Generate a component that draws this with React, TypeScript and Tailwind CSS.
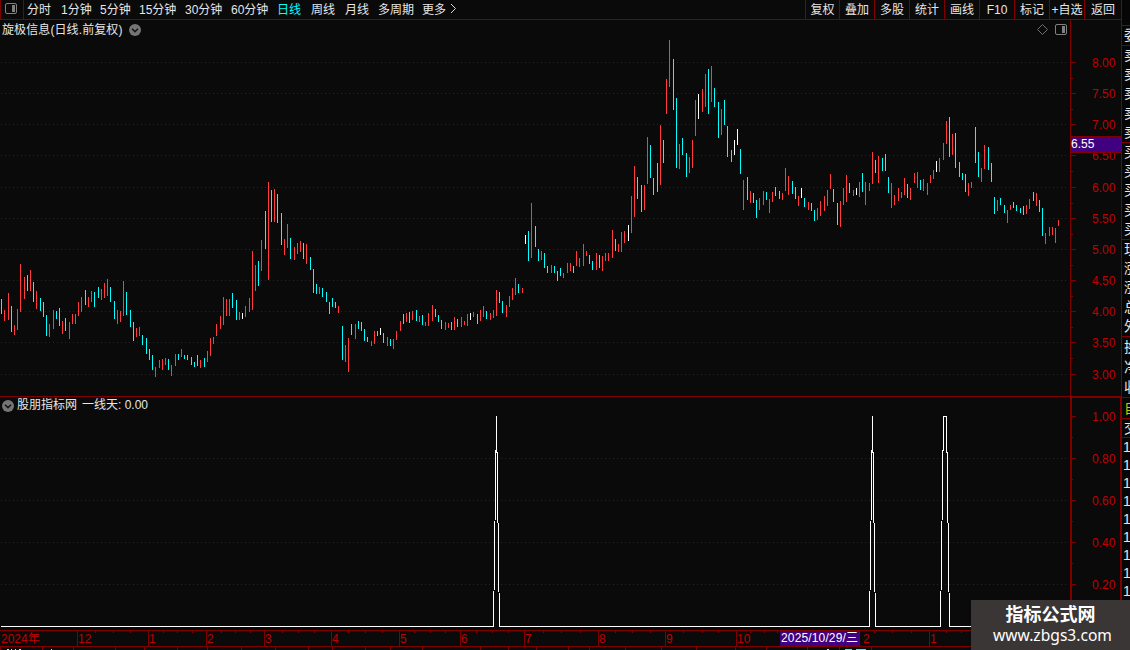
import React from "react";
import clsx from "clsx";

type Bar = [number, number, number];

// [x, high, low] in pixels
const upBars: Bar[] = [
  [4, 310, 321], [8, 293, 320], [14, 325, 335], [17, 309, 330], [20, 264, 312], [24, 277, 299],
  [30, 270, 291], [36, 291, 309], [49, 324, 337], [53, 310, 329], [62, 321, 334], [69, 322, 339],
  [72, 314, 324], [75, 314, 324], [78, 302, 316], [81, 297, 312], [88, 297, 307], [91, 291, 302],
  [101, 289, 300], [104, 283, 298], [107, 279, 296], [117, 310, 324], [120, 311, 322], [123, 281, 316],
  [136, 328, 337], [139, 327, 336], [155, 367, 377], [159, 360, 368], [162, 359, 370], [165, 358, 365],
  [171, 365, 376], [175, 354, 366], [181, 349, 357], [200, 360, 368], [207, 351, 362], [210, 338, 356],
  [213, 337, 344], [216, 324, 336], [220, 316, 329], [223, 297, 325], [226, 299, 316], [229, 299, 316],
  [239, 312, 320], [245, 306, 317], [249, 298, 312], [252, 251, 310], [255, 265, 291], [261, 240, 271],
  [268, 182, 280], [274, 189, 222], [284, 239, 255], [287, 224, 248], [294, 247, 260], [297, 243, 254],
  [300, 241, 252], [306, 244, 264], [319, 287, 294], [338, 306, 313], [345, 345, 362], [348, 338, 372],
  [355, 324, 339], [371, 341, 346], [374, 331, 344], [387, 337, 346], [393, 339, 349], [396, 331, 340],
  [400, 321, 331], [406, 313, 322], [412, 311, 320], [419, 316, 322], [425, 322, 326], [428, 313, 326],
  [432, 305, 321], [445, 322, 330], [448, 323, 328], [454, 317, 330], [461, 317, 327], [464, 321, 325],
  [467, 314, 326], [473, 312, 317], [480, 310, 321], [483, 306, 317], [490, 313, 320], [493, 310, 318],
  [496, 290, 316], [506, 305, 317], [509, 296, 307], [512, 288, 300], [515, 278, 295], [522, 288, 293],
  [531, 203, 258], [541, 251, 260], [551, 265, 273], [563, 273, 278], [567, 263, 273], [570, 263, 271],
  [576, 251, 266], [579, 258, 267], [583, 244, 266], [586, 251, 256], [596, 253, 270], [602, 256, 271],
  [605, 253, 261], [608, 253, 261], [612, 230, 258], [618, 244, 252], [621, 232, 252], [624, 231, 243],
  [631, 196, 233], [634, 166, 217], [644, 185, 210], [647, 137, 184], [660, 125, 185], [666, 79, 114],
  [669, 40, 87], [679, 144, 169], [689, 157, 173], [692, 140, 168], [695, 100, 136], [702, 89, 112],
  [705, 74, 107], [711, 66, 102], [721, 109, 135], [743, 180, 210], [750, 191, 203], [759, 198, 210],
  [763, 191, 205], [769, 199, 213], [772, 192, 202], [782, 193, 200], [785, 168, 191], [788, 176, 195],
  [798, 196, 206], [808, 202, 210], [817, 208, 220], [820, 201, 216], [824, 196, 211], [827, 190, 206],
  [830, 174, 189], [840, 201, 227], [843, 188, 205], [846, 175, 202], [853, 190, 196], [859, 182, 197],
  [865, 182, 205], [869, 183, 191], [872, 152, 184], [878, 156, 183], [891, 183, 208], [894, 195, 205],
  [898, 188, 201], [901, 192, 198], [904, 178, 195], [910, 188, 200], [914, 173, 183], [917, 172, 188],
  [923, 179, 191], [927, 183, 195], [930, 175, 183], [933, 170, 179], [939, 158, 172], [943, 143, 160],
  [946, 121, 144], [952, 134, 155], [968, 183, 196], [971, 182, 188], [981, 168, 182], [984, 145, 169],
  [997, 200, 211], [1007, 210, 223], [1010, 205, 210], [1026, 205, 214], [1029, 199, 209], [1036, 193, 206],
  [1045, 233, 244], [1049, 227, 236], [1052, 227, 235], [1055, 228, 243], [1058, 220, 226],
];

const downBars: Bar[] = [
  [1, 299, 314], [11, 306, 332], [27, 275, 291], [33, 282, 302], [40, 298, 311], [43, 302, 317],
  [46, 315, 336], [56, 311, 319], [59, 308, 326], [65, 318, 331], [85, 290, 305], [94, 292, 307],
  [98, 287, 298], [110, 287, 302], [114, 301, 319], [126, 292, 315], [130, 310, 327], [133, 322, 341],
  [142, 335, 345], [146, 338, 354], [149, 349, 360], [152, 355, 370], [168, 359, 370], [178, 354, 360],
  [184, 355, 359], [187, 355, 360], [191, 357, 365], [194, 362, 367], [197, 355, 366], [204, 358, 367],
  [232, 293, 308], [236, 300, 320], [258, 261, 286], [265, 211, 249], [271, 190, 222], [277, 194, 223],
  [281, 213, 245], [290, 238, 259], [303, 243, 259], [310, 257, 270], [313, 269, 293], [316, 284, 294],
  [322, 288, 297], [326, 292, 302], [329, 302, 314], [332, 298, 307], [335, 302, 308], [342, 326, 360],
  [351, 324, 335], [358, 321, 329], [361, 322, 331], [364, 329, 341], [367, 337, 342], [377, 331, 336],
  [383, 333, 343], [390, 339, 346], [403, 314, 324], [409, 312, 323], [416, 310, 321], [422, 315, 325],
  [435, 309, 317], [438, 315, 322], [441, 320, 329], [451, 322, 330], [457, 319, 327], [477, 314, 324],
  [486, 311, 319], [499, 292, 303], [502, 301, 313], [518, 284, 293], [528, 231, 261], [535, 226, 247],
  [538, 249, 261], [544, 253, 268], [547, 266, 273], [554, 266, 273], [557, 271, 281], [560, 268, 276],
  [573, 266, 273], [589, 255, 264], [592, 261, 270], [599, 255, 268], [615, 239, 251], [637, 177, 199],
  [641, 185, 212], [650, 145, 178], [653, 178, 195], [657, 163, 192], [663, 140, 163], [673, 59, 110],
  [676, 98, 168], [682, 138, 155], [686, 153, 177], [708, 69, 114], [714, 88, 107], [718, 102, 138],
  [724, 100, 125], [727, 126, 157], [731, 150, 162], [740, 149, 174], [747, 177, 200], [753, 193, 203],
  [756, 200, 218], [766, 192, 200], [775, 187, 196], [779, 191, 199], [792, 181, 194], [795, 187, 199],
  [804, 198, 207], [811, 203, 211], [814, 210, 221], [833, 189, 202], [837, 203, 225], [849, 183, 193],
  [862, 173, 192], [875, 160, 173], [882, 158, 171], [885, 154, 171], [888, 177, 193], [907, 184, 198],
  [920, 180, 190], [949, 117, 157], [955, 133, 168], [959, 162, 177], [962, 173, 180], [965, 174, 192],
  [975, 127, 163], [978, 152, 177], [988, 147, 170], [991, 163, 182], [994, 197, 214], [1000, 198, 205],
  [1004, 205, 213], [1013, 202, 208], [1016, 205, 211], [1020, 208, 213], [1023, 206, 215],
  [1033, 192, 201], [1039, 200, 212], [1042, 208, 236],
];

const flatBars: Bar[] = [
  [242, 313, 319], [380, 328, 335], [470, 313, 320], [525, 235, 244], [628, 225, 241], [698, 94, 119],
  [734, 140, 155], [737, 129, 145], [801, 188, 198], [856, 188, 195], [936, 161, 172],
];

const periods = [
  { label: "分时", width: "w-[34px]" },
  { label: "1分钟", width: "w-[39px]" },
  { label: "5分钟", width: "w-[39px]" },
  { label: "15分钟", width: "w-[46px]" },
  { label: "30分钟", width: "w-[46px]" },
  { label: "60分钟", width: "w-[46px]" },
  { label: "日线", width: "w-[34px]", active: true },
  { label: "周线", width: "w-[34px]" },
  { label: "月线", width: "w-[33px]" },
  { label: "多周期", width: "w-[44px]" },
  { label: "更多", width: "w-[28px]" },
];

const tools = [
  { label: "复权", width: "w-[34px]" },
  { label: "叠加", width: "w-[35px]" },
  { label: "多股", width: "w-[35px]" },
  { label: "统计", width: "w-[35px]" },
  { label: "画线", width: "w-[35px]" },
  { label: "F10", width: "w-[35px]" },
  { label: "标记", width: "w-[35px]" },
  { label: "+自选", width: "w-[35px]" },
  { label: "返回", width: "w-[37px]" },
];

const priceTicks = [
  { y: 62, label: "8.00" },
  { y: 93, label: "7.50" },
  { y: 124, label: "7.00" },
  { y: 155, label: "6.50" },
  { y: 187, label: "6.00" },
  { y: 218, label: "5.50" },
  { y: 249, label: "5.00" },
  { y: 280, label: "4.50" },
  { y: 311, label: "4.00" },
  { y: 342, label: "3.50" },
  { y: 374, label: "3.00" },
];
const priceMinor = [78, 109, 171, 203, 234, 265, 296, 327, 358];

const signalTicks = [
  { y: 416, label: "1.00" },
  { y: 458, label: "0.80" },
  { y: 500, label: "0.60" },
  { y: 542, label: "0.40" },
  { y: 584, label: "0.20" },
];
const signalMinor = [437, 479, 521, 563, 605];

const months = [
  { x: 77, label: "12" },
  { x: 148, label: "1" },
  { x: 206, label: "2" },
  { x: 264, label: "3" },
  { x: 331, label: "4" },
  { x: 399, label: "5" },
  { x: 460, label: "6" },
  { x: 524, label: "7" },
  { x: 598, label: "8" },
  { x: 665, label: "9" },
  { x: 736, label: "10" },
  { x: 859, label: "2" },
  { x: 929, label: "1" },
];
const dayTicks = [
  95, 113, 130, 163, 177, 192, 221, 235, 250, 282, 298, 314, 348, 365, 382, 414, 430, 445, 476, 492,
  508, 543, 561, 580, 615, 632, 650, 683, 702, 718, 750, 764, 777, 874, 892, 911, 946, 961,
];
const footTicks = [
  0, 42, 73, 115, 144, 177, 207, 241, 275, 308, 332, 365, 390, 422, 480, 508, 536, 568, 589, 625,
  661, 696, 735, 766, 807, 839, 871,
];

const quoteGroups = [
  { rows: ["委"], height: "h-5" },
  { rows: ["卖", "卖", "卖", "卖", "卖"], height: "h-[97px]" },
  { rows: ["买", "买", "买", "买", "买"], height: "h-[97px]" },
  { rows: ["现", "涨", "涨", "总", "外"], height: "h-[97px]" },
  { rows: ["换", "净", "收"], height: "h-[61px]" },
  { rows: ["自"], height: "h-[21px]", highlight: true },
  { rows: ["交"], height: "h-[19px]" },
];

const barsPath = (bars: Bar[]) =>
  bars.map(([x, top, bottom]) => `M${x} ${top}h1V${bottom}h-1z`).join("");

const PanelIcon = ({ className }: { className?: string }) => (
  <svg width="12" height="12" viewBox="0 0 12 12" className={className}>
    <rect x="0.5" y="0.5" width="11" height="10" rx="1.5" fill="none" stroke="#808080" />
    <rect x="7" y="2" width="3" height="7" fill="#808080" />
  </svg>
);

const ToggleIcon = () => (
  <svg width="12" height="12" viewBox="0 0 12 12" className="shrink-0">
    <circle cx="6" cy="6" r="6" fill="#757575" />
    <path d="M3 4.8 6 7.6 9 4.8" fill="none" stroke="#151515" strokeWidth="1.5" />
  </svg>
);

const Toolbar = () => (
  <header className="flex h-5 shrink-0 items-stretch border-b border-[#800000] leading-[20px]">
    <div className="flex w-6 items-start border-x border-[#800000] pt-[3px] pl-1">
      <PanelIcon />
    </div>
    <nav className="flex pl-[3px]">
      {periods.map((item) => (
        <span
          key={item.label}
          className={clsx("shrink-0 whitespace-nowrap", item.width, item.active && "text-[#00ffff]")}
        >
          {item.label}
        </span>
      ))}
      <svg width="8" height="19" viewBox="0 0 8 19">
        <path d="M1 4 5.5 8.5 1 13" fill="none" stroke="#d8d8d8" />
      </svg>
    </nav>
    <div className="ml-auto flex">
      {tools.map((item) => (
        <span
          key={item.label}
          className={clsx(
            "flex shrink-0 justify-center border-l border-[#800000] whitespace-nowrap",
            item.width
          )}
        >
          {item.label}
        </span>
      ))}
    </div>
  </header>
);

const PriceChart = () => (
  <section className="relative h-[376px] shrink-0">
    <svg
      width="1121"
      height="376"
      viewBox="0 20 1121 376"
      shapeRendering="crispEdges"
      className="absolute inset-0"
    >
      {priceTicks.map((tick) => (
        <g key={tick.label}>
          <path d={`M1 ${tick.y + 0.5}H1067`} stroke="#780000" strokeDasharray="1 3" />
          <path d={`M1071 ${tick.y + 0.5}h5`} stroke="#800000" />
          <text x="1092" y={tick.y + 5} fill="#c00000">
            {tick.label}
          </text>
        </g>
      ))}
      {priceMinor.map((y) => (
        <path key={y} d={`M1071 ${y + 0.5}h2`} stroke="#800000" />
      ))}
      <path d="M1070.5 20V396" stroke="#800000" />
      <path d={barsPath(upBars)} fill="#ff3b3b" />
      <path d={barsPath(downBars)} fill="#00ffff" />
      <path d={barsPath(flatBars)} fill="#ffffff" />
      <rect x="1071" y="136" width="50" height="17" fill="#800000" />
      <rect x="1071" y="137" width="50" height="15" fill="#400080" />
      <text x="1071" y="148" fill="#ffffff">
        6.55
      </text>
    </svg>
    <div className="relative flex h-5 items-center pl-[2px] leading-5">
      <span className="tracking-[0.1px]">旋极信息(日线.前复权)</span>
      <span className="ml-[6px]">
        <ToggleIcon />
      </span>
      <svg width="11" height="12" viewBox="0 0 11 12" className="ml-auto">
        <path d="M5.5 .5 10.5 5.5 5.5 10.5 .5 5.5z" fill="none" stroke="#707070" />
      </svg>
      <PanelIcon className="mr-[54px] ml-[7px]" />
    </div>
  </section>
);

const SignalChart = () => (
  <section className="relative h-[234px] shrink-0">
    <svg
      width="1121"
      height="234"
      viewBox="0 396 1121 234"
      shapeRendering="crispEdges"
      className="absolute inset-0"
    >
      {signalTicks.map((tick, i) => (
        <g key={tick.label}>
          {i > 0 && <path d={`M1 ${tick.y + 0.5}H1067`} stroke="#780000" strokeDasharray="1 3" />}
          <path d={`M1072 ${tick.y + 0.5}h4`} stroke="#800000" />
          <text x="1092" y={tick.y + 5} fill="#c00000">
            {tick.label}
          </text>
        </g>
      ))}
      {signalMinor.map((y) => (
        <path key={y} d={`M1072 ${y + 0.5}h1`} stroke="#800000" />
      ))}
      <path d="M0 396.5H1070" stroke="#800000" />
      <path d="M1071 630V397H1121V630" fill="none" stroke="#800000" strokeWidth="2" />
      <path
        d="M1 626.5H493.5L496.5 416.5L499.5 626.5H869.5L872.5 416.5L875.5 626.5H940.5L943.5 416.5H946.5L949.5 626.5H1070"
        fill="none"
        stroke="#ffffff"
        strokeLinejoin="bevel"
      />
    </svg>
    <div className="relative flex h-[19px] items-center pl-[2px] leading-[19px]">
      <ToggleIcon />
      <span className="ml-[3px]">股朋指标网</span>
      <span className="ml-[5px]">一线天: 0.00</span>
    </div>
  </section>
);

const TimeAxis = () => (
  <svg
    width="1121"
    height="20"
    viewBox="0 630 1121 20"
    shapeRendering="crispEdges"
    className="shrink-0"
  >
    <path d="M0 630.5H1121M0 646.5H1121" stroke="#800000" />
    {dayTicks.map((x) => (
      <path key={x} d={`M${x + 0.5} 631v2`} stroke="#800000" />
    ))}
    {footTicks.map((x) => (
      <path key={x} d={`M${x + 0.5} 647v3`} stroke="#800000" />
    ))}
    <text x="1" y="643" fill="#c00000">
      2024年
    </text>
    {months.map((month) => (
      <g key={month.x}>
        <path d={`M${month.x + 0.5} 631v15`} stroke="#800000" />
        <text x={month.x + (month.x === 859 ? 4 : 1)} y="643" fill="#c00000">
          {month.label}
        </text>
      </g>
    ))}
    <rect x="780" y="631" width="79" height="15" fill="#400080" />
    <text x="781" y="642" fill="#ffffff" textLength="77">
      2025/10/29/三
    </text>
    <path
      d="M7 649.5h2M11 649.5h1M15 649.5h1M19 649.5h2M51 649.5h1M827 649.5h2"
      stroke="#d8d8d8"
    />
    <path d="M845 649.5h7M856 649.5h10" stroke="#00ffff" />
  </svg>
);

const QuoteStrip = () => (
  <aside className="w-[9px] shrink-0 overflow-hidden border-l border-[#800000] bg-[#060606] pt-[25px] text-[14px]">
    {quoteGroups.map((group, i) => (
      <div
        key={i}
        className={clsx(
          "flex flex-col justify-around overflow-hidden border-t border-[#800000] pl-[2px] leading-[19px]",
          group.height,
          group.highlight && "text-[#c8c800]"
        )}
      >
        {group.rows.map((row, j) => (
          <span key={j} className="block h-[19px] w-4">
            {row}
          </span>
        ))}
      </div>
    ))}
    <div className="border-t border-[#800000] pl-px leading-[18px]">
      {Array.from({ length: 9 }, (_, i) => (
        <div key={i}>1</div>
      ))}
    </div>
  </aside>
);

export default function App() {
  return (
    <div className="relative flex h-[650px] w-[1130px] overflow-hidden bg-[#0a0a0a] font-['Liberation_Sans','Noto_Sans_CJK_SC',sans-serif] text-[12px] text-[#e6e6e6]">
      <main className="flex w-[1121px] shrink-0 flex-col">
        <Toolbar />
        <PriceChart />
        <SignalChart />
        <TimeAxis />
      </main>
      <QuoteStrip />
      <div className="absolute right-0 bottom-0 flex h-[50px] w-[159px] flex-col items-center bg-[#3b3636] pt-[4px] text-white">
        <p className="text-[18px] leading-[22px] font-bold">指标公式网</p>
        <p className="pl-[4px] font-['Noto_Sans',sans-serif] text-[15.6px] leading-[19px]">www.zbgs3.com</p>
      </div>
    </div>
  );
}
